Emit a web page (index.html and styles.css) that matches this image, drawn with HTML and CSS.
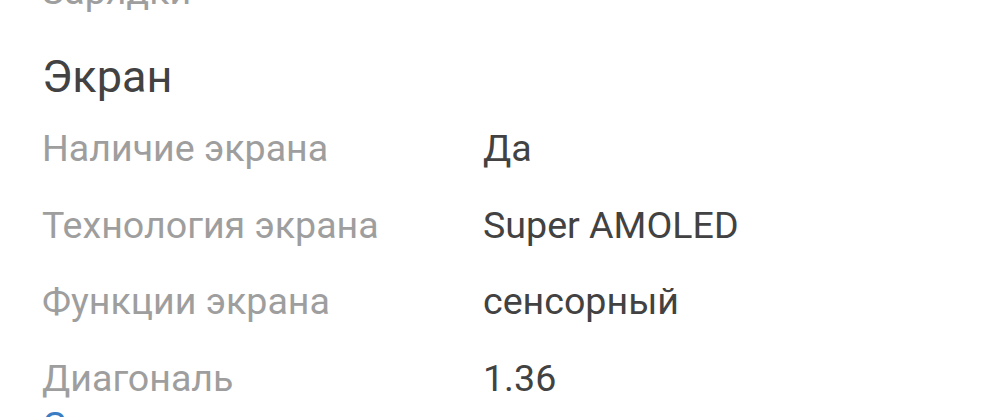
FILE: index.html
```html
<!DOCTYPE html>
<html lang="ru">
<head>
<meta charset="utf-8">
<link rel="stylesheet" href="styles.css">
</head>
<body>
<div class="page">
  <div class="prev">Зарядки</div>
  <h2 class="section-title">Экран</h2>
  <div class="specs">
    <div class="row"><div class="label">Наличие экрана</div><div class="value">Да</div></div>
    <div class="row"><div class="label">Технология экрана</div><div class="value">Super AMOLED</div></div>
    <div class="row"><div class="label">Функции экрана</div><div class="value">сенсорный</div></div>
    <div class="row"><div class="label">Диагональ</div><div class="value">1.36</div></div>
  </div>
  <a class="toggle" href="#">Скрыть</a>
</div>
</body>
</html>
```
FILE: styles.css
```css
html, body {
  margin: 0;
  padding: 0;
  background: #ffffff;
}
body {
  font-family: Roboto, "Noto Sans", sans-serif;
  overflow: hidden;
}
.page {
  padding-left: 42px;
  margin-top: -31px;
}
.prev {
  font-size: 37.6px;
  line-height: 44px;
  color: #9e9e9e;
}
.section-title {
  margin: 0;
  font-weight: 400;
  font-size: 45px;
  line-height: 67px;
  padding-top: 30px;
  color: #424242;
}
.specs {
  display: flex;
  flex-direction: column;
}
.row {
  display: flex;
  font-size: 37.6px;
  line-height: 76.5px;
}
.label {
  width: 441px;
  flex-shrink: 0;
  color: #9e9e9e;
}
.value {
  color: #424242;
}
.toggle {
  display: block;
  margin-top: -13px;
  font-size: 37.6px;
  line-height: 44px;
  color: #3b7dc4;
  text-decoration: none;
}
```
